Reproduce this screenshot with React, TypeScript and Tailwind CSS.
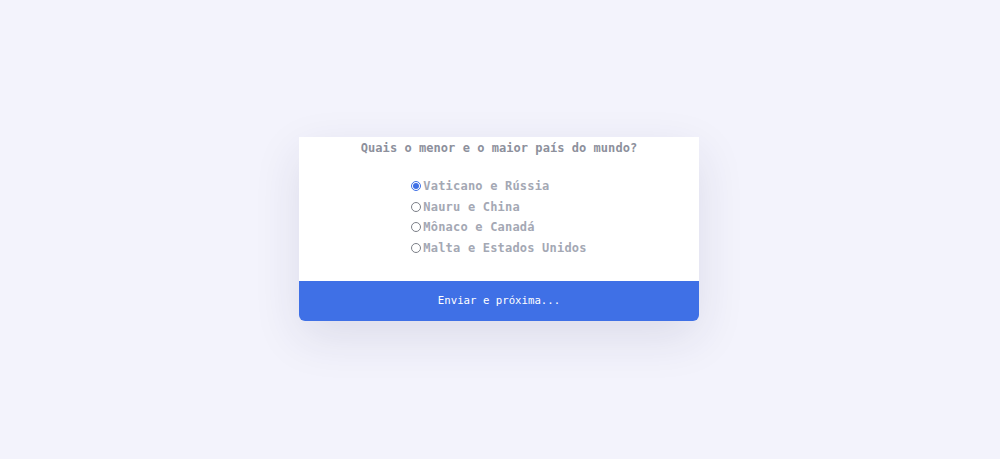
import React, { useState } from 'react'

const options = ['Vaticano e Rússia', 'Nauru e China', 'Mônaco e Canadá', 'Malta e Estados Unidos']

export default function App() {
  const [selected, setSelected] = useState(0)

  return (
    <div
      className="w-full h-[459px] bg-[#f3f3fc] flex justify-center pt-[137px] pr-[2px]"
      style={{ fontFamily: '"DejaVu Sans Mono", "Liberation Mono", monospace' }}
    >
      <div className="w-[400px] h-[184px] bg-white rounded-b-md shadow-[0_16px_48px_rgba(40,40,80,0.11)] flex flex-col">
        <h2 className="text-[12px] leading-[20px] font-bold text-[#8d909c] text-center pt-[1px] tracking-[0.05px]">
          Quais o menor e o maior país do mundo?
        </h2>

        <div className="flex-1 flex justify-center pt-[18px]">
          <ul className="flex flex-col">
            {options.map((opt, i) => (
              <li
                key={opt}
                onClick={() => setSelected(i)}
                className="flex items-center h-[20.5px] cursor-pointer text-[12px] font-bold text-[#a4a8b4] tracking-[0.2px]"
              >
                <span
                  className={
                    i === selected
                      ? 'w-[10px] h-[10px] rounded-full border border-[#3f70e6] flex items-center justify-center mr-[2px]'
                      : 'w-[10px] h-[10px] rounded-full border border-[#7c7f88] mr-[2px]'
                  }
                >
                  {i === selected && <span className="w-[6px] h-[6px] rounded-full bg-[#3f70e6]" />}
                </span>
                {opt}
              </li>
            ))}
          </ul>
        </div>

        <button className="h-[40px] w-full bg-[#3f70e6] rounded-b-md text-white text-[10.7px] font-medium">
          Enviar e próxima...
        </button>
      </div>
    </div>
  )
}
